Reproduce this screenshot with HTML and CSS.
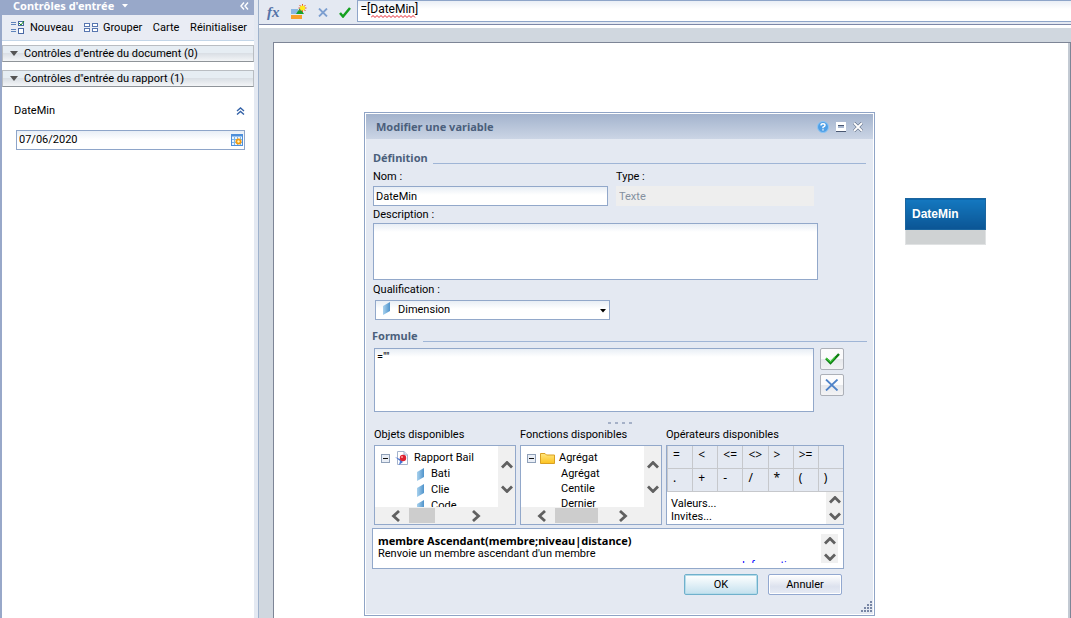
FILE: index.html
```html
<!DOCTYPE html>
<html lang="fr">
<head>
    <meta charset="UTF-8">
    <meta name="viewport" content="width=device-width, initial-scale=1.0">
    <title>Modifier une variable</title>
    <link rel="stylesheet" href="styles.css">
</head>
<body>
    <svg class="defs" aria-hidden="true">
        <defs>
            <linearGradient id="dimFill" x1="0" x2="1" y1="0" y2="0">
                <stop offset="0" stop-color="#a9d2ee"/>
                <stop offset="1" stop-color="#4f93cb"/>
            </linearGradient>
            <linearGradient id="folderFill" x1="0" x2="0" y1="0" y2="1">
                <stop offset="0" stop-color="#ffe680"/>
                <stop offset="1" stop-color="#fcc21f"/>
            </linearGradient>
        </defs>
        <symbol id="dim" viewBox="0 0 8 13"><path d="M0 4L7 0V9L0 13Z" fill="url(#dimFill)"/></symbol>
        <symbol id="up" viewBox="0 0 12 8"><path d="M1 6.5L6 1.5L11 6.5" fill="none" stroke="#606060" stroke-width="2.8"/></symbol>
        <symbol id="down" viewBox="0 0 12 8"><path d="M1 1.5L6 6.5L11 1.5" fill="none" stroke="#606060" stroke-width="2.8"/></symbol>
        <symbol id="left" viewBox="0 0 10 12"><path d="M8 1L2.5 6L8 11" fill="none" stroke="#606060" stroke-width="2.8"/></symbol>
        <symbol id="right" viewBox="0 0 10 12"><path d="M2 1L7.5 6L2 11" fill="none" stroke="#606060" stroke-width="2.8"/></symbol>
        <symbol id="minus" viewBox="0 0 9 9"><rect x=".5" y=".5" width="8" height="8" fill="#e9eef6" stroke="#8fa0b8"/><path d="M2 4.5H7" stroke="#111"/></symbol>
    </svg>

    <aside class="sidebar">
        <div class="sidebar-header">
            <button class="sidebar-title">Contrôles d'entrée
                <svg width="7" height="4" viewBox="0 0 7 4"><path d="M0 0H6L3 3.5Z" fill="#fff"/></svg>
            </button>
            <button class="plain" aria-label="Réduire le panneau">
                <svg width="9" height="8" viewBox="0 0 9 8"><path d="M4 .5L1 4L4 7.5M8 .5L5 4L8 7.5" fill="none" stroke="#fff" stroke-width="1.4"/></svg>
            </button>
        </div>
        <div class="sidebar-tools">
            <button class="tool">
                <svg width="14" height="13" viewBox="0 0 14 13" shape-rendering="crispEdges">
                    <path d="M0 1.5H5M0 3.5H5M0 8.5H5M0 10.5H5" stroke="#5f83bb"/>
                    <rect x="7.5" y=".5" width="5" height="4" fill="#fff" stroke="#4b69a5"/>
                    <rect x="7.5" y="7.5" width="5" height="5" fill="#fff" stroke="#4b69a5"/>
                    <path d="M8 2L10 4L13 0" fill="none" stroke="#18881c" shape-rendering="auto"/>
                </svg>Nouveau
            </button>
            <button class="tool">
                <svg width="14" height="9" viewBox="0 0 14 9" fill="#fff" stroke="#5876b0" shape-rendering="crispEdges">
                    <path d="M.5 .5H5.5V3.5H.5ZM.5 5.5H5.5V8.5H.5ZM8.5 .5H13.5V3.5H8.5ZM8.5 5.5H13.5V8.5H8.5Z"/>
                </svg>Grouper
            </button>
            <button class="tool">Carte</button>
            <button class="tool">Réinitialiser</button>
        </div>
        <button class="section"><svg width="8" height="5" viewBox="0 0 8 5"><path d="M0 0H8L4 5Z" fill="#555"/></svg>Contrôles d"entrée du document (0)</button>
        <button class="section"><svg width="8" height="5" viewBox="0 0 8 5"><path d="M0 0H8L4 5Z" fill="#555"/></svg>Contrôles d"entrée du rapport (1)</button>
        <div class="control">
            <div class="control-head">
                <label for="dateMin">DateMin</label>
                <button class="plain" aria-label="Réduire">
                    <svg width="9" height="8" viewBox="0 0 9 8"><path d="M1 4L4.5 1L8 4M1 7.5L4.5 4.5L8 7.5" fill="none" stroke="#3563a8" stroke-width="1.4"/></svg>
                </button>
            </div>
            <div class="date-box">
                <input id="dateMin" type="text" value="07/06/2020">
                <button class="plain" aria-label="Calendrier">
                    <svg width="12" height="12" viewBox="0 0 12 12">
                        <rect x=".5" y=".5" width="11" height="11" fill="#eaf5ff" stroke="#4e8fda"/>
                        <path d="M0 1.5H12" stroke="#4e8fda" stroke-width="2"/>
                        <path d="M1 5.5H11M1 8.5H11M3.5 3V11M6.5 3V11M9.5 3V11" stroke="#7db7ea"/>
                        <circle cx="7.5" cy="7.5" r="3" fill="#f59a0c"/><circle cx="7.5" cy="7.5" r="1.2" fill="#fff3bd"/>
                    </svg>
                </button>
            </div>
        </div>
    </aside>

    <main class="main">
        <div class="formula-bar">
            <button class="plain fx" aria-label="Éditeur de formule"><i>fx</i></button>
            <button class="plain" aria-label="Créer une variable">
                <svg width="16" height="16" viewBox="0 0 16 16">
                    <rect y="5" width="7" height="5" fill="#8bb7e3"/><rect y="11" width="11" height="4" fill="#f6a02c"/>
                    <path d="M5 10L9 4L13 10Z" fill="#17a12c"/>
                    <path d="M11.5 0V8M7.5 4H15.5M8.5 1L14.5 7M14.5 1L8.5 7" stroke="#e4572b"/>
                    <circle cx="11.5" cy="4" r="2.5" fill="#ffec1c"/>
                </svg>
            </button>
            <button class="plain" aria-label="Annuler la formule">
                <svg width="10" height="9" viewBox="0 0 10 9"><path d="M1 .5L9 8.5M9 .5L1 8.5" stroke="#7d9fd0" stroke-width="1.8"/></svg>
            </button>
            <button class="plain" aria-label="Valider la formule">
                <svg width="12" height="11" viewBox="0 0 12 11"><path d="M1 6L4 9.5L11 1" fill="none" stroke="#14a01f" stroke-width="2.5"/></svg>
            </button>
            <div class="formula-box">
                <input type="text" value="=[DateMin]" aria-label="Formule">
                <svg class="squiggle" width="46" height="3" viewBox="0 0 46 3" aria-hidden="true"><path d="M0 2.5L2 .5L4 2.5L6 .5L8 2.5L10 .5L12 2.5L14 .5L16 2.5L18 .5L20 2.5L22 .5L24 2.5L26 .5L28 2.5L30 .5L32 2.5L34 .5L36 2.5L38 .5L40 2.5L42 .5L44 2.5" fill="none" stroke="#e5202c"/></svg>
            </div>
        </div>
        <div class="canvas">
            <div class="page">
                <table class="report">
                    <thead><tr><th>DateMin</th></tr></thead>
                    <tbody><tr><td></td></tr></tbody>
                </table>
            </div>
        </div>
    </main>

    <div class="dialog" role="dialog" aria-labelledby="dialogTitle">
        <div class="dialog-title">
            <h1 id="dialogTitle">Modifier une variable</h1>
            <button class="plain" aria-label="Aide">
                <svg width="12" height="12" viewBox="0 0 12 12">
                    <circle cx="6" cy="6" r="5.5" fill="#4f9fe6" stroke="#8cc5f5"/>
                    <path d="M4 4.5Q4 2.8 6 2.8T8 4.4Q8 5.3 6 6.2V7.2M6 8.2V9.6" fill="none" stroke="#fff" stroke-width="1.4"/>
                </svg>
            </button>
            <button class="plain" aria-label="Agrandir">
                <svg width="10" height="10" viewBox="0 0 10 10" shape-rendering="crispEdges"><rect width="10" height="9" fill="#fff"/><rect x="2" y="3" width="6" height="3" fill="#a9b8d0"/><path d="M2 3.5H8M0 9.5H10" stroke="#4a5872"/></svg>
            </button>
            <button class="plain" aria-label="Fermer">
                <svg width="10" height="10" viewBox="0 0 10 10"><path d="M1 1L9 9M9 1L1 9" stroke="#4a5872" stroke-width="3"/><path d="M1 1L9 9M9 1L1 9" stroke="#fff" stroke-width="2"/></svg>
            </button>
        </div>
        <div class="dialog-body">
            <h2 class="legend">Définition</h2>
            <div class="row">
                <div class="field name-field">
                    <label for="nom">Nom :</label>
                    <input id="nom" type="text" value="DateMin">
                </div>
                <div class="field type-field">
                    <label for="type">Type :</label>
                    <input id="type" type="text" value="Texte" disabled>
                </div>
            </div>
            <div class="field stacked">
                <label for="description">Description :</label>
                <textarea id="description" class="description"></textarea>
            </div>
            <div class="field stacked">
                <label for="qualification">Qualification :</label>
                <div class="select-box">
                    <select id="qualification"><option>Dimension</option></select>
                    <svg class="select-icon" width="8" height="13"><use href="#dim"/></svg>
                    <svg class="select-arrow" width="6" height="4" viewBox="0 0 6 4"><path d="M0 0H6L3 3.5Z"/></svg>
                </div>
            </div>
        </div>
        <div class="dialog-body formula-part">
            <h2 class="legend">Formule</h2>
            <div class="formula-row">
                <textarea class="formula" aria-label="Formule">=""</textarea>
                <div class="formula-buttons">
                    <button class="icon-button" aria-label="Valider">
                        <svg width="15" height="12" viewBox="0 0 15 12"><path d="M1 5.5L5.5 10L14 1" fill="none" stroke="#0c7d10" stroke-width="2.4"/><path d="M1 5L5.5 9L10 4" fill="none" stroke="#3fc83a" stroke-width="1.2"/></svg>
                    </button>
                    <button class="icon-button" aria-label="Effacer">
                        <svg width="14" height="12" viewBox="0 0 14 12"><path d="M1 .5L12.5 11.5M12.5 .5L1 11.5" stroke="#4f83c8" stroke-width="1.8"/></svg>
                    </button>
                </div>
            </div>
            <div class="splitter"><i></i><i></i><i></i><i></i></div>
            <div class="panels">
                <section>
                    <h3>Objets disponibles</h3>
                    <div class="panel tree-panel">
                        <ul class="tree">
                            <li class="root"><svg width="9" height="9"><use href="#minus"/></svg>
                                <svg width="14" height="14" viewBox="0 0 14 14"><path d="M2.5 .5H9L12.5 4V13.5H2.5Z" fill="#fff" stroke="#a4b3cc"/><path d="M9 .5V4H12.5" fill="#dbe5f2" stroke="#a4b3cc"/><path d="M0 6L5 8L8 11L4 14L5 10Z" fill="#4773d2"/><circle cx="8" cy="7" r="3.2" fill="#dd2230"/><circle cx="7" cy="6" r="1" fill="#ffa09c"/></svg>
                                Rapport Bail</li>
                            <li class="leaf"><svg width="8" height="13"><use href="#dim"/></svg>Bati</li>
                            <li class="leaf"><svg width="8" height="13"><use href="#dim"/></svg>Clie</li>
                            <li class="leaf"><svg width="8" height="13"><use href="#dim"/></svg>Code</li>
                        </ul>
                        <div class="vscroll"><svg width="12" height="8"><use href="#up"/></svg><svg width="12" height="8"><use href="#down"/></svg></div>
                        <div class="hscroll"><svg width="10" height="12"><use href="#left"/></svg><span class="thumb"></span><svg width="10" height="12"><use href="#right"/></svg></div>
                    </div>
                </section>
                <section>
                    <h3>Fonctions disponibles</h3>
                    <div class="panel tree-panel">
                        <ul class="tree functions">
                            <li class="root"><svg width="9" height="9"><use href="#minus"/></svg>
                                <svg width="15" height="12" viewBox="0 0 15 12"><path d="M.5 1.5H5L6.5 3H14.5V11.5H.5Z" fill="url(#folderFill)" stroke="#d9a023"/></svg>
                                Agrégat</li>
                            <li class="leaf">Agrégat</li>
                            <li class="leaf">Centile</li>
                            <li class="leaf">Dernier</li>
                        </ul>
                        <div class="vscroll"><svg width="12" height="8"><use href="#up"/></svg><svg width="12" height="8"><use href="#down"/></svg></div>
                        <div class="hscroll wide"><svg width="10" height="12"><use href="#left"/></svg><span class="thumb"></span><svg width="10" height="12"><use href="#right"/></svg></div>
                    </div>
                </section>
                <section class="operators">
                    <h3>Opérateurs disponibles</h3>
                    <div class="panel">
                        <div class="ops">
                            <button>=</button><button>&lt;</button><button>&lt;=</button><button>&lt;&gt;</button><button>&gt;</button><button>&gt;=</button><span></span>
                            <button>.</button><button>+</button><button>-</button><button>/</button><button>*</button><button>(</button><button>)</button>
                        </div>
                        <div class="more">
                            <ul><li>Valeurs...</li><li>Invites...</li></ul>
                            <div class="vscroll"><svg width="12" height="8"><use href="#up"/></svg><svg width="12" height="8"><use href="#down"/></svg></div>
                        </div>
                    </div>
                </section>
            </div>
            <div class="help">
                <div class="help-text">
                    <strong>membre Ascendant(membre;niveau|distance)</strong>
                    <p>Renvoie un membre ascendant d'un membre</p>
                    <a href="#">Informations</a>
                </div>
                <div class="vscroll"><svg width="12" height="8"><use href="#up"/></svg><svg width="12" height="8"><use href="#down"/></svg></div>
            </div>
            <div class="actions">
                <button class="ok">OK</button>
                <button class="cancel">Annuler</button>
            </div>
        </div>
        <svg class="resize" width="12" height="12" viewBox="0 0 12 12" fill="#7886a5"><path d="M9 0h2v2h-2zM6 3h2v2h-2zM9 3h2v2h-2zM3 6h2v2h-2zM6 6h2v2h-2zM9 6h2v2h-2zM0 9h2v2h-2zM3 9h2v2h-2zM6 9h2v2h-2zM9 9h2v2h-2z"/></svg>
    </div>
</body>
</html>
```

FILE: styles.css
```css
* {
    box-sizing: border-box;
}
body, button, input, select, textarea {
    font-family: Roboto, "Noto Sans", sans-serif;
    font-size: 11px;
    line-height: 14px;
    color: #000;
}
body {
    margin: 0;
    min-height: 100vh;
    display: flex;
    position: relative;
    overflow: hidden;
    background: #e4e9f2;
}
h1, h2, h3, p, ul {
    margin: 0;
    padding: 0;
    font-size: 11px;
    list-style: none;
}
h1, h2, strong, .sidebar-title {
    font-family: "Noto Sans", "Open Sans", sans-serif;
}
h3 {
    font-weight: normal;
}
button {
    margin: 0;
    padding: 0;
    border: 0;
    background: none;
    cursor: pointer;
}
svg {
    display: block;
    flex: none;
}
.defs {
    position: absolute;
    width: 0;
    height: 0;
}

/* left panel */
.sidebar {
    width: 254px;
    flex: none;
    border-left: 2px solid #98a8c9;
    background: #fff;
}
.sidebar-header {
    display: flex;
    justify-content: space-between;
    align-items: center;
    height: 15px;
    padding: 0 5px 4px 11px;
    background: #98a8c9;
}
.sidebar-title {
    display: flex;
    align-items: center;
    gap: 8px;
    font-weight: bold;
    color: #fff;
}
.sidebar-tools {
    display: flex;
    justify-content: space-between;
    align-items: center;
    height: 26px;
    margin-bottom: 4px;
    padding: 0 7px 0 9px;
    border-bottom: 1px solid #c3d6e8;
    background: #e9ecf4;
}
.tool {
    display: flex;
    align-items: center;
    gap: 5px;
}
.section {
    display: flex;
    align-items: center;
    gap: 6px;
    width: 100%;
    height: 17px;
    margin-bottom: 8px;
    padding: 0 7px;
    border: 1px solid #b9bdc2;
    border-bottom-color: #8f9499;
    background: linear-gradient(#e6edf3 0, #e6edf3 45%, #dadfe5 50%, #f3f5f7 100%);
}
.control {
    padding: 9px 9px 0 12px;
}
.control-head {
    display: flex;
    justify-content: space-between;
    align-items: center;
    margin: 0 0 12px;
}
.date-box {
    display: flex;
    align-items: center;
    height: 20px;
    margin-left: 2px;
    padding: 0 1px;
    border: 1px solid #8ea5c9;
    background: linear-gradient(#e8eef6, #fff 50%);
}
.date-box input, .formula-box input {
    flex: 1;
    min-width: 0;
    padding: 0 1px;
    border: 0;
    background: none;
}

/* report area */
.main {
    flex: 1;
    display: flex;
    flex-direction: column;
    margin-left: 4px;
    border-left: 1px solid #9fb2cc;
}
.formula-bar {
    display: flex;
    align-items: center;
    gap: 11px;
    height: 24px;
    padding-left: 8px;
}
.fx {
    font-family: "Liberation Serif", serif;
    font-size: 15px;
    font-weight: bold;
    color: #5573a8;
}
.formula-box {
    position: relative;
    display: flex;
    flex: 1;
    height: 22px;
    margin: 0 0 2px -5px;
    padding: 0 2px 4px;
    border: 1px solid #8ea5c9;
    border-right: 0;
    background: linear-gradient(#eaeff6, #fff 40%);
}
.formula-box input {
    font-size: 12px;
}
.squiggle {
    position: absolute;
    left: 13px;
    top: 14px;
}
.canvas {
    flex: 1;
    display: flex;
    padding: 17px 0 0 14px;
    border-top: 1px solid #7d88a8;
    background: linear-gradient(#fff 3px, #d0d7df 3px);
}
.page {
    flex: 1;
    position: relative;
    border: 1px solid #7d8596;
    border-bottom: 0;
    background: #fff;
    box-shadow: inset -2px 0 #c3cad3;
}
.report {
    position: absolute;
    left: 631px;
    top: 155px;
    width: 81px;
    border-collapse: collapse;
    font-family: "Liberation Sans", sans-serif;
}
.report th {
    height: 31px;
    padding: 0 6px;
    border: 1px solid #1b659f;
    background: linear-gradient(#1478c0, #0b5594);
    font-size: 12px;
    text-align: left;
    color: #fff;
}
.report td {
    height: 15px;
    padding: 0;
    border: 1px solid #e0e2e3;
    background: #cfd2d3;
}

/* variable editor */
.dialog {
    position: absolute;
    left: 364px;
    top: 112px;
    width: 511px;
    border: 1px solid #8fa4c6;
    background: #e4e9f2;
    box-shadow: inset 0 0 0 1px #fff;
    padding: 1px;
}
.dialog-title {
    display: flex;
    align-items: center;
    gap: 7px;
    height: 25px;
    padding: 0 10px;
    background: linear-gradient(#a3b3cd, #cbd5e5);
}
.dialog-title h1 {
    flex: 1;
    color: #4b5f7c;
}
.dialog-body {
    padding: 12px 7px 0;
}
.formula-part {
    padding: 9px 6px 19px;
}
.legend {
    display: flex;
    align-items: flex-end;
    gap: 5px;
    margin-bottom: 5px;
    color: #4b5f7c;
}
.legend::after {
    content: "";
    flex: 1;
    height: 1px;
    margin-bottom: 1px;
    background: #9fb5d6;
}
.row {
    display: flex;
    gap: 8px;
}
.field label {
    display: block;
    margin-bottom: 2px;
}
.field input, textarea, select {
    display: block;
    width: 100%;
    margin: 0;
    padding: 1px 2px;
    border: 1px solid #92a8ca;
    border-radius: 0;
    background: linear-gradient(#e8eef5, #fff 8px);
    resize: none;
}
.field input, select {
    height: 20px;
}
.name-field {
    width: 235px;
}
.type-field {
    width: 198px;
}
.field input:disabled {
    border-color: #eee;
    background: #eee;
    color: #8490a0;
}
.field .description {
    width: 445px;
    height: 57px;
}
.stacked {
    margin-top: 2px;
}
.stacked + .stacked {
    margin-top: 3px;
}
.stacked label {
    margin-bottom: 1px;
}
.select-box {
    position: relative;
    width: 235px;
    margin: 3px 0 0 2px;
}
select {
    appearance: none;
    padding: 0 22px;
}
.select-icon, .select-arrow {
    position: absolute;
    pointer-events: none;
}
.select-icon {
    left: 8px;
    top: 2px;
}
.select-arrow {
    right: 4px;
    top: 9px;
}
.formula-row {
    display: flex;
    gap: 6px;
    padding: 0 23px 0 2px;
}
.formula {
    flex: 1;
    height: 64px;
}
.formula-buttons {
    display: flex;
    flex-direction: column;
    gap: 4px;
}
.icon-button {
    display: flex;
    align-items: center;
    justify-content: center;
    width: 24px;
    height: 22px;
    border: 1px solid #acb0b8;
    border-radius: 2px;
    background: linear-gradient(#fbfbfc 50%, #e6e8ec 50%, #f3f3f5);
}
.splitter {
    display: flex;
    justify-content: center;
    gap: 4px;
    padding: 10px 0 4px;
}
.splitter i {
    width: 3px;
    height: 2px;
    background: #a5b1c8;
}
.panels {
    display: flex;
    gap: 4px;
    padding: 0 23px 0 2px;
}
.panels section {
    width: 142px;
}
.panels .operators {
    flex: 1;
}
.panels h3 {
    margin-bottom: 3px;
}
.panel {
    height: 80px;
    overflow: hidden;
    border: 1px solid #92a8ca;
    background: #fff;
}
.tree-panel {
    display: grid;
    grid-template-columns: 1fr 17px;
    grid-template-rows: 61px 17px;
}
.tree {
    overflow: hidden;
    padding: 4px 0 0 6px;
}
.tree li {
    display: flex;
    align-items: center;
    height: 16px;
}
.tree .root {
    gap: 5px;
}
.tree .leaf {
    gap: 6px;
    padding-left: 36px;
}
.functions .leaf {
    height: 15px;
    padding-left: 34px;
}
.functions .root {
    gap: 4px;
}
.vscroll {
    display: flex;
    flex-direction: column;
    align-items: center;
    justify-content: center;
    gap: 16px;
    width: 17px;
    background: #f0f0f0;
}
.hscroll {
    grid-column: 1 / 3;
    display: flex;
    align-items: center;
    gap: 8px;
    padding-left: 16px;
    background: #f0f0f0;
}
.thumb {
    width: 26px;
    height: 15px;
    margin-right: 28px;
    background: #cdcdcd;
}
.wide .thumb {
    width: 43px;
    margin-right: 12px;
}
.ops {
    display: grid;
    grid-template-columns: repeat(7, 1fr);
    background: #e4e9f2;
}
.ops button, .ops span {
    height: 23px;
    border: 1px solid #c6c8cc;
    border-width: 0 0 1px 1px;
}
.ops button {
    padding: 0 0 4px 5px;
    font-family: "Noto Sans", sans-serif;
    font-size: 12px;
    text-align: left;
}
.more {
    display: flex;
    justify-content: space-between;
    height: 32px;
}
.more ul {
    padding: 5px 4px;
}
.more li {
    height: 13px;
}
.more .vscroll {
    gap: 8px;
}
.help {
    display: flex;
    justify-content: space-between;
    height: 41px;
    margin: 3px 23px 5px 0;
    padding: 5px;
    border: 1px solid #92a8ca;
    background: #fff;
}
.help-text {
    flex: 1;
    overflow: hidden;
    line-height: 13px;
}
.help-text strong, .help-text a {
    display: block;
}
.help-text a {
    padding-left: 364px;
    line-height: 11px;
    color: #00f;
}
.help .vscroll {
    gap: 8px;
}
.actions {
    display: flex;
    justify-content: flex-end;
    gap: 10px;
    padding-right: 25px;
}
.actions button {
    width: 74px;
    height: 21px;
    border: 1px solid #92a8d0;
    border-radius: 2px;
    box-shadow: inset 0 0 0 1px #fff;
    background: linear-gradient(#fff, #dde2ee 60%, #e6ebf5);
}
.actions .ok {
    border-color: #6fb0cc;
    box-shadow: inset 0 0 0 1px #b5dcea;
    background: linear-gradient(#fff, #dcedf5 60%, #c3e0ee);
}
.resize {
    position: absolute;
    right: 1px;
    bottom: 2px;
}
```
